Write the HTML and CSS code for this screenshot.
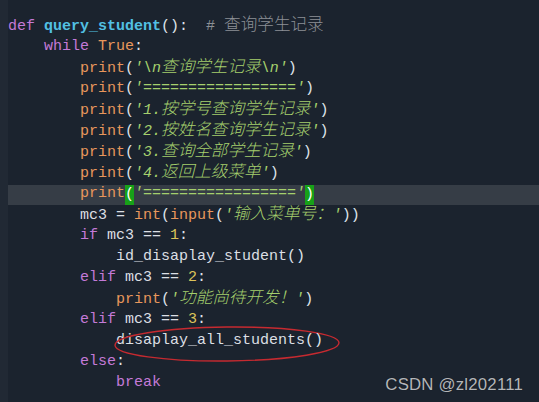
FILE: index.html
```html
<!DOCTYPE html>
<html lang="zh-CN">
<head>
<meta charset="utf-8">
<link rel="stylesheet" href="styles.css">
</head>
<body>
<div class="editor">
  <div class="gutter"></div>
  <div class="code">
    <div class="line"><span class="kw">def</span> <span class="fn">query_student</span><span class="pn">():</span>  <span class="cm"># <span class="cj">查询学生记录</span></span></div>
    <div class="line">    <span class="kw">while</span> <span class="bi">True</span><span class="pn">:</span></div>
    <div class="line">        <span class="bi">print</span><span class="pn">(</span><span class="st">'\n<span class="cj">查询学生记录</span>\n'</span><span class="pn">)</span></div>
    <div class="line">        <span class="bi">print</span><span class="pn">(</span><span class="st">'================='</span><span class="pn">)</span></div>
    <div class="line">        <span class="bi">print</span><span class="pn">(</span><span class="st">'1.<span class="cj">按学号查询学生记录</span>'</span><span class="pn">)</span></div>
    <div class="line">        <span class="bi">print</span><span class="pn">(</span><span class="st">'2.<span class="cj">按姓名查询学生记录</span>'</span><span class="pn">)</span></div>
    <div class="line">        <span class="bi">print</span><span class="pn">(</span><span class="st">'3.<span class="cj">查询全部学生记录</span>'</span><span class="pn">)</span></div>
    <div class="line">        <span class="bi">print</span><span class="pn">(</span><span class="st">'4.<span class="cj">返回上级菜单</span>'</span><span class="pn">)</span></div>
    <div class="line current">        <span class="bi">print</span><span class="pn match">(</span><span class="st">'================='</span><span class="pn match">)</span></div>
    <div class="line">        mc3 = <span class="bi">int</span><span class="pn">(</span><span class="bi">input</span><span class="pn">(</span><span class="st">'<span class="cj">输入菜单号：</span>'</span><span class="pn">))</span></div>
    <div class="line">        <span class="kw">if</span> mc3 == <span class="nu">1</span><span class="pn">:</span></div>
    <div class="line">            id_disaplay_student<span class="pn">()</span></div>
    <div class="line">        <span class="kw">elif</span> mc3 == <span class="nu">2</span><span class="pn">:</span></div>
    <div class="line">            <span class="bi">print</span><span class="pn">(</span><span class="st">'<span class="cj">功能尚待开发！</span>'</span><span class="pn">)</span></div>
    <div class="line">        <span class="kw">elif</span> mc3 == <span class="nu">3</span><span class="pn">:</span></div>
    <div class="line">            disaplay_all_students<span class="pn">()</span></div>
    <div class="line">        <span class="kw">else</span><span class="pn">:</span></div>
    <div class="line">            <span class="kw">break</span></div>
  </div>
</div>
<svg class="mark" width="539" height="402" viewBox="0 0 539 402" aria-hidden="true">
  <ellipse cx="227" cy="344" rx="112" ry="17" transform="rotate(-0.6 227 344)" fill="none" stroke="#c62a30" stroke-width="1.4"/>
</svg>
<div class="watermark">CSDN @zl202111</div>
</body>
</html>
```

FILE: styles.css
```css
html, body {
  margin: 0;
  padding: 0;
  background: #1b232e;
  width: 539px;
  height: 402px;
  overflow: hidden;
}

.editor {
  display: flex;
  height: 402px;
}

.gutter {
  width: 8px;
  background: #212934;
  flex: none;
}

.code {
  flex: 1;
  padding-top: 15px;
  font-family: "Liberation Mono", "Noto Sans CJK SC", monospace;
  font-size: 15px;
  line-height: 21px;
  color: #dcdfe4;
}

.line {
  height: 21px;
  position: relative;
  white-space: pre;
}

.line.current::before {
  content: "";
  position: absolute;
  left: 0;
  right: 0;
  top: 2px;
  height: 20px;
  background: #363d46;
  z-index: 0;
}

.line > span {
  position: relative;
  z-index: 1;
}

.cj {
  font-family: "Noto Sans CJK SC", sans-serif;
  font-size: 16.6px;
  font-weight: 300;
  line-height: 1;
}

.kw { color: #c47ad8; }
.fn { color: #52c0e3; font-weight: bold; }
.pn { color: #dfe3ea; }
.cm { color: #8c9096; }
.bi { color: #e8975c; }
.st { color: #a5d06d; font-style: italic; }
.nu { color: #dcc35a; }

.match {
  display: inline-block;
  background: #17a118;
  color: #ffffff;
  height: 20px;
  vertical-align: top;
  margin-top: 2px;
  line-height: 19px;
}

.mark {
  position: absolute;
  left: 0;
  top: 0;
  pointer-events: none;
}

.watermark {
  position: absolute;
  right: 16px;
  top: 375px;
  font-family: "Liberation Sans", Arial, sans-serif;
  font-size: 16.8px;
  color: #b4b6b9;
  text-shadow: 0 0 1px rgba(0, 0, 0, 0.5);
  letter-spacing: 0.2px;
}
```
